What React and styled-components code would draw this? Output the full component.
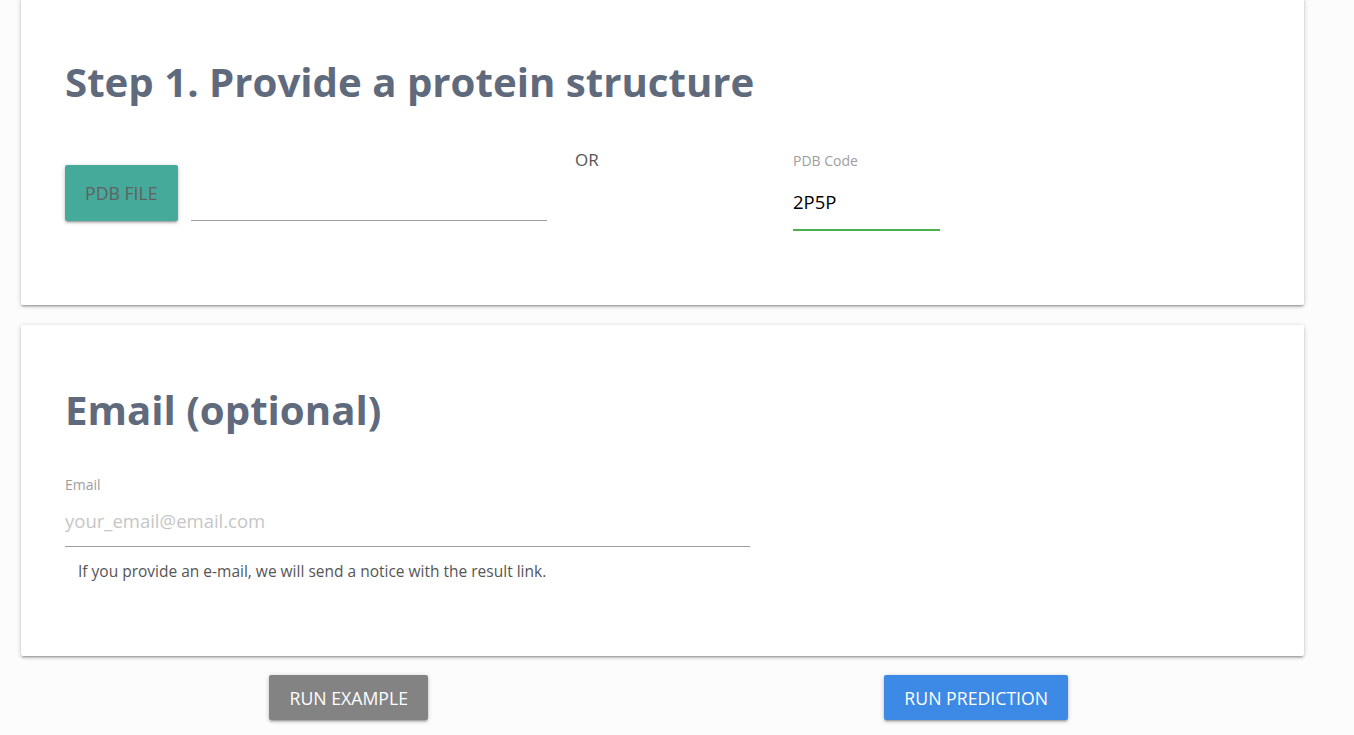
import React from 'react'
import styled, { createGlobalStyle } from 'styled-components'

const GlobalStyle = createGlobalStyle`
  html, body {
    margin: 0;
    padding: 0;
    background: #fcfcfc;
    font-family: "Open Sans", "Noto Sans", sans-serif;
    color: rgba(0, 0, 0, 0.87);
  }
  * { box-sizing: border-box; }
`

const Page = styled.main`
  width: 1283px;
  margin: -2px 0 0 21px;
  padding-bottom: 20px;
`

const Card = styled.section`
  background: #fff;
  border-radius: 2px;
  box-shadow: 0 2px 2px 0 rgba(0,0,0,0.14), 0 3px 1px -2px rgba(0,0,0,0.12), 0 1px 5px 0 rgba(0,0,0,0.2);
  padding: ${p => p.$pad || '56px 44px 72px'};
  margin-bottom: 20px;
  height: ${p => p.$h};
`

const Title = styled.h3`
  margin: 0;
  font-size: 40.2px;
  font-weight: 700;
  line-height: 1.1;
  color: #5f6a7d;
`

const StructureRow = styled.div`
  display: flex;
  align-items: flex-start;
  margin-top: 48px;
`

const FileField = styled.div`
  display: flex;
  align-items: flex-end;
  width: 482px;
  padding-top: 13px;
`

const Button = styled.button`
  border: none;
  border-radius: 2px;
  height: ${p => p.$h || '45px'};
  padding: 0 20px;
  font-family: inherit;
  font-size: 17.7px;
  text-transform: uppercase;
  background: ${p => p.$bg};
  color: ${p => p.$fg || '#fff'};
  box-shadow: 0 2px 2px 0 rgba(0,0,0,0.14), 0 3px 1px -2px rgba(0,0,0,0.12), 0 1px 5px 0 rgba(0,0,0,0.2);
  cursor: pointer;
`

const PathLine = styled.div`
  flex: 1;
  margin-left: 13px;
  border-bottom: 1px solid #9e9e9e;
  height: 1px;
`

const Or = styled.div`
  width: 246px;
  padding-left: 28px;
  font-size: 17px;
  color: #555;
  line-height: 24px;
  margin-top: -4px;
`

const Field = styled.div`
  width: ${p => p.$w};
  margin-top: ${p => p.$mt || 0};
`

const Label = styled.label`
  display: block;
  font-size: 14px;
  color: #9e9e9e;
  line-height: 18px;
`

const Input = styled.input`
  display: block;
  width: 100%;
  border: none;
  border-bottom: 1px solid ${p => p.$line || '#9e9e9e'};
  box-shadow: ${p => p.$line ? `0 1px 0 0 ${p.$line}` : 'none'};
  background: transparent;
  outline: none;
  padding: ${p => p.$pt || '0'} 0 0;
  height: ${p => p.$h || '45px'};
  font-family: inherit;
  font-size: 18.5px;
  color: #000;
  &::placeholder { color: #c6c6c6; }
`

const Helper = styled.p`
  margin: 14px 0 0 13px;
  font-size: 15.5px;
  line-height: 21px;
  color: #555;
`

const ButtonRow = styled.div`
  display: grid;
  grid-template-columns: 1fr 1fr;
  padding: 0 14px;
  margin-top: -1px;
  justify-items: center;
`

export default function App() {
  return (
    <>
      <GlobalStyle />
      <Page>
        <Card $pad="62px 44px 0" $h="307px">
          <Title>Step 1. Provide a protein structure</Title>
          <StructureRow>
            <FileField>
              <Button $bg="#46aa9b" $fg="#616161" $h="56px">PDB File</Button>
              <PathLine />
            </FileField>
            <Or>OR</Or>
            <Field $w="147px">
              <Label>PDB Code</Label>
              <Input $line="#4caf50" defaultValue="2P5P" $h="60px" $pt="4px" />
            </Field>
          </StructureRow>
        </Card>
        <Card $pad="63px 44px 0" $h="331px">
          <Title>Email (optional)</Title>
          <Field $w="685px" $mt="44px">
            <Label>Email</Label>
            <Input placeholder="your_email@email.com" $h="53px" $pt="1px" />
          </Field>
          <Helper>If you provide an e-mail, we will send a notice with the result link.</Helper>
        </Card>
        <ButtonRow>
          <Button $bg="#838383">Run example</Button>
          <Button $bg="#3d89e6">Run prediction</Button>
        </ButtonRow>
      </Page>
    </>
  )
}
